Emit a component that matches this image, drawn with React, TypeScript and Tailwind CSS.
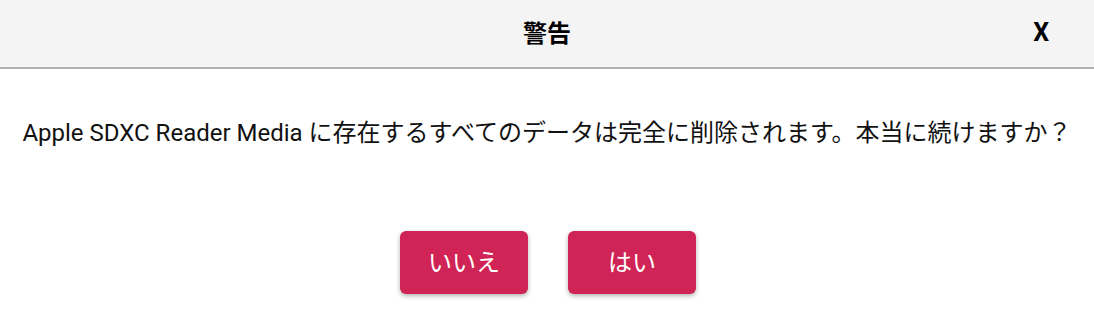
export default function App() {
  const font = { fontFamily: 'Roboto, "Noto Sans CJK JP", sans-serif' };
  return (
    <div className="w-[1094px] h-[324px] bg-white" style={font}>
      <div className="relative flex h-[69px] items-center justify-center border-b-2 border-[#b0b0b0] bg-[#f4f4f4]">
        <h1 className="text-[24px] font-bold text-black">警告</h1>
        <button className="absolute right-[45px] top-[17px] text-[25px] font-bold leading-[32px] text-black">
          X
        </button>
      </div>
      <p className="mt-[48px] whitespace-nowrap text-center text-[24px] leading-[32px] text-[#111]">
        Apple SDXC Reader Media に存在するすべてのデータは完全に削除されます。本当に続けますか？
      </p>
      <div className="mt-[82px] flex justify-center gap-[40px] pl-[2px]">
        <button className="h-[63px] w-[128px] rounded-[6px] bg-[#cf2455] text-[24px] text-white shadow-[0_2px_5px_rgba(0,0,0,0.3)]">
          いいえ
        </button>
        <button className="h-[63px] w-[128px] rounded-[6px] bg-[#cf2455] text-[24px] text-white shadow-[0_2px_5px_rgba(0,0,0,0.3)]">
          はい
        </button>
      </div>
    </div>
  );
}
